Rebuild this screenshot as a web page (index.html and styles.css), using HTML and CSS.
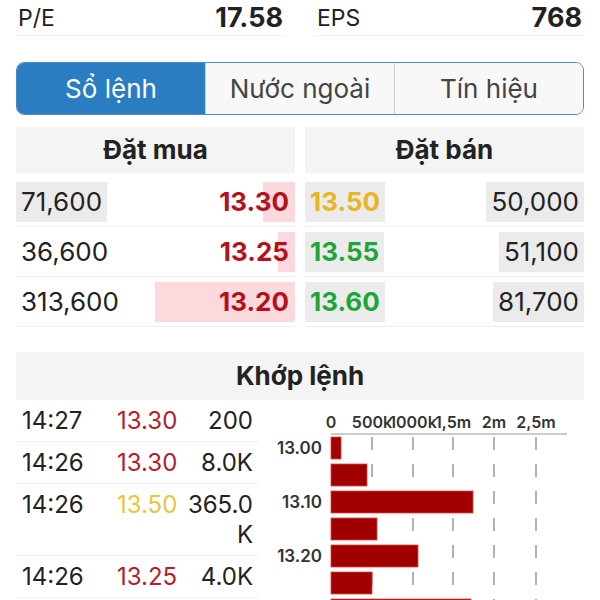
FILE: index.html
```html
<!DOCTYPE html>
<html lang="vi">
<head>
    <meta charset="UTF-8">
    <meta name="viewport" content="width=device-width, initial-scale=1.0">
    <title>Sổ lệnh</title>
    <link rel="stylesheet" href="styles.css">
</head>
<body>
<div class="page">
    <div class="stats">
        <div class="stat"><span>P/E</span><span class="stat-value">17.58</span></div>
        <div class="stat"><span>EPS</span><span class="stat-value">768</span></div>
    </div>

    <div class="tabs">
        <button class="tab active">Sổ lệnh</button>
        <button class="tab">Nước ngoài</button>
        <button class="tab">Tín hiệu</button>
    </div>

    <div class="book">
        <div class="book-side buy">
            <div class="book-head">Đặt mua</div>
            <div class="book-row">
                <span class="bar" style="width: 32px"></span>
                <span class="cell hl">71,600</span>
                <span class="cell price red">13.30</span>
            </div>
            <div class="book-row">
                <span class="bar" style="width: 17px"></span>
                <span class="cell">36,600</span>
                <span class="cell price red">13.25</span>
            </div>
            <div class="book-row">
                <span class="bar" style="width: 140px"></span>
                <span class="cell">313,600</span>
                <span class="cell price red">13.20</span>
            </div>
        </div>
        <div class="book-side sell">
            <div class="book-head">Đặt bán</div>
            <div class="book-row">
                <span class="cell price hl yellow">13.50</span>
                <span class="cell hl">50,000</span>
            </div>
            <div class="book-row">
                <span class="cell price hl green">13.55</span>
                <span class="cell hl">51,100</span>
            </div>
            <div class="book-row">
                <span class="cell price hl green">13.60</span>
                <span class="cell hl">81,700</span>
            </div>
        </div>
    </div>

    <div class="match">
        <div class="match-head">Khớp lệnh</div>
        <div class="match-body">
            <div class="trades">
                <div class="trade"><span>14:27</span><span class="t-red">13.30</span><span class="vol">200</span></div>
                <div class="trade"><span>14:26</span><span class="t-red">13.30</span><span class="vol">8.0K</span></div>
                <div class="trade"><span>14:26</span><span class="t-yellow">13.50</span><span class="vol">365.0K</span></div>
                <div class="trade"><span>14:26</span><span class="t-red">13.25</span><span class="vol">4.0K</span></div>
            </div>

            <svg class="chart" width="314" height="200" viewBox="0 0 314 200">
                <g class="axis-labels">
                    <text x="61" y="28">0</text>
                    <text x="102" y="28">500k</text>
                    <text x="143" y="28">1000k</text>
                    <text x="183" y="28">1,5m</text>
                    <text x="224" y="28">2m</text>
                    <text x="266" y="28">2,5m</text>
                </g>
                <line class="axis" x1="61" y1="34" x2="297" y2="34"/>
                <g class="grid">
                    <line x1="102" y1="37" x2="102" y2="200"/>
                    <line x1="143" y1="37" x2="143" y2="200"/>
                    <line x1="183" y1="37" x2="183" y2="200"/>
                    <line x1="224" y1="37" x2="224" y2="200"/>
                    <line x1="266" y1="37" x2="266" y2="200"/>
                </g>
                <g class="bars">
                    <rect x="61" y="37" width="10" height="22"/>
                    <rect x="61" y="64" width="36" height="22"/>
                    <rect x="61" y="91" width="142" height="22"/>
                    <rect x="61" y="118" width="46" height="22"/>
                    <rect x="61" y="145" width="87" height="22"/>
                    <rect x="61" y="172" width="41" height="22"/>
                    <rect x="61" y="199" width="140" height="22"/>
                </g>
                <g class="price-labels">
                    <text x="52" y="54">13.00</text>
                    <text x="52" y="108">13.10</text>
                    <text x="52" y="162">13.20</text>
                </g>
            </svg>
        </div>
    </div>
</div>
</body>
</html>
```

FILE: styles.css
```css
body {
    margin: 0;
    font-family: Inter, "Liberation Sans", sans-serif;
    color: #222;
    background: #fff;
    overflow: hidden;
}
.page {
    padding: 0 16px;
}
.stats {
    display: grid;
    grid-template-columns: 1fr 1fr;
    gap: 30px;
}
.stat {
    display: flex;
    justify-content: space-between;
    align-items: center;
    height: 35px;
    padding: 0 2px;
    font-size: 23px;
    line-height: 28px;
    border-bottom: 1px solid #eee;
}
.stat-value {
    font-size: 27px;
    font-weight: 700;
}
.tabs {
    display: flex;
    box-sizing: border-box;
    height: 53px;
    margin-top: 26px;
    border: 1.5px solid #4f8cc6;
    border-radius: 8px;
    overflow: hidden;
}
.tab {
    flex: 1;
    border: none;
    background: #f8f8f8;
    font-family: inherit;
    font-size: 26px;
    color: #444;
}
.tab + .tab {
    border-left: 1px solid #cfcfcf;
}
.tab.active {
    background: #2b7dc1;
    color: #fff;
}
.book {
    display: grid;
    grid-template-columns: 1fr 1fr;
    gap: 10px;
    margin-top: 12px;
}
.book-head, .match-head {
    background: #f4f4f4;
    text-align: center;
    font-weight: 700;
    font-size: 26px;
}
.book-head {
    height: 46px;
    line-height: 46px;
    margin-bottom: 4px;
}
.book-row {
    position: relative;
    display: flex;
    justify-content: space-between;
    padding: 5px 0 4px;
    font-size: 26px;
    border-bottom: 1px solid #efefef;
}
.cell {
    position: relative;
    line-height: 40px;
    padding: 0 5px;
}
.buy .price {
    padding-right: 6px;
}
.bar {
    position: absolute;
    right: 0;
    top: 5px;
    height: 40px;
    background: #fcd9dc;
}
.hl {
    background: #ebebeb;
}
.price {
    font-weight: 700;
}
.red { color: #b4111d; }
.yellow { color: #e7b622; }
.green { color: #1ea538; }

.match {
    margin-top: 25px;
}
.match-head {
    height: 48px;
    line-height: 48px;
}
.match-body {
    display: grid;
    grid-template-columns: 242px 1fr;
    gap: 12px;
}
.trade {
    display: grid;
    grid-template-columns: 95px 68px 1fr;
    padding: 6px 5px 5px 6px;
    line-height: 30px;
    font-size: 24px;
    border-bottom: 1px solid #eee;
}
.vol {
    text-align: right;
    overflow-wrap: anywhere;
}
.t-red { color: #b3202c; }
.t-yellow { color: #e9c53c; }

.chart {
    overflow: visible;
}
.chart text {
    font-family: Inter, "Liberation Sans", sans-serif;
    font-size: 16px;
    font-weight: 600;
    fill: #333;
}
.price-labels text {
    font-size: 17px;
    text-anchor: end;
}
.axis-labels text {
    text-anchor: middle;
}
.axis {
    stroke: #bbb;
    stroke-width: 1.5;
}
.grid line {
    stroke: #999;
    stroke-width: 1.5;
    stroke-dasharray: 13 14;
}
.bars rect {
    fill: #a10000;
    stroke: #d44;
    stroke-width: 0.8;
}
```
